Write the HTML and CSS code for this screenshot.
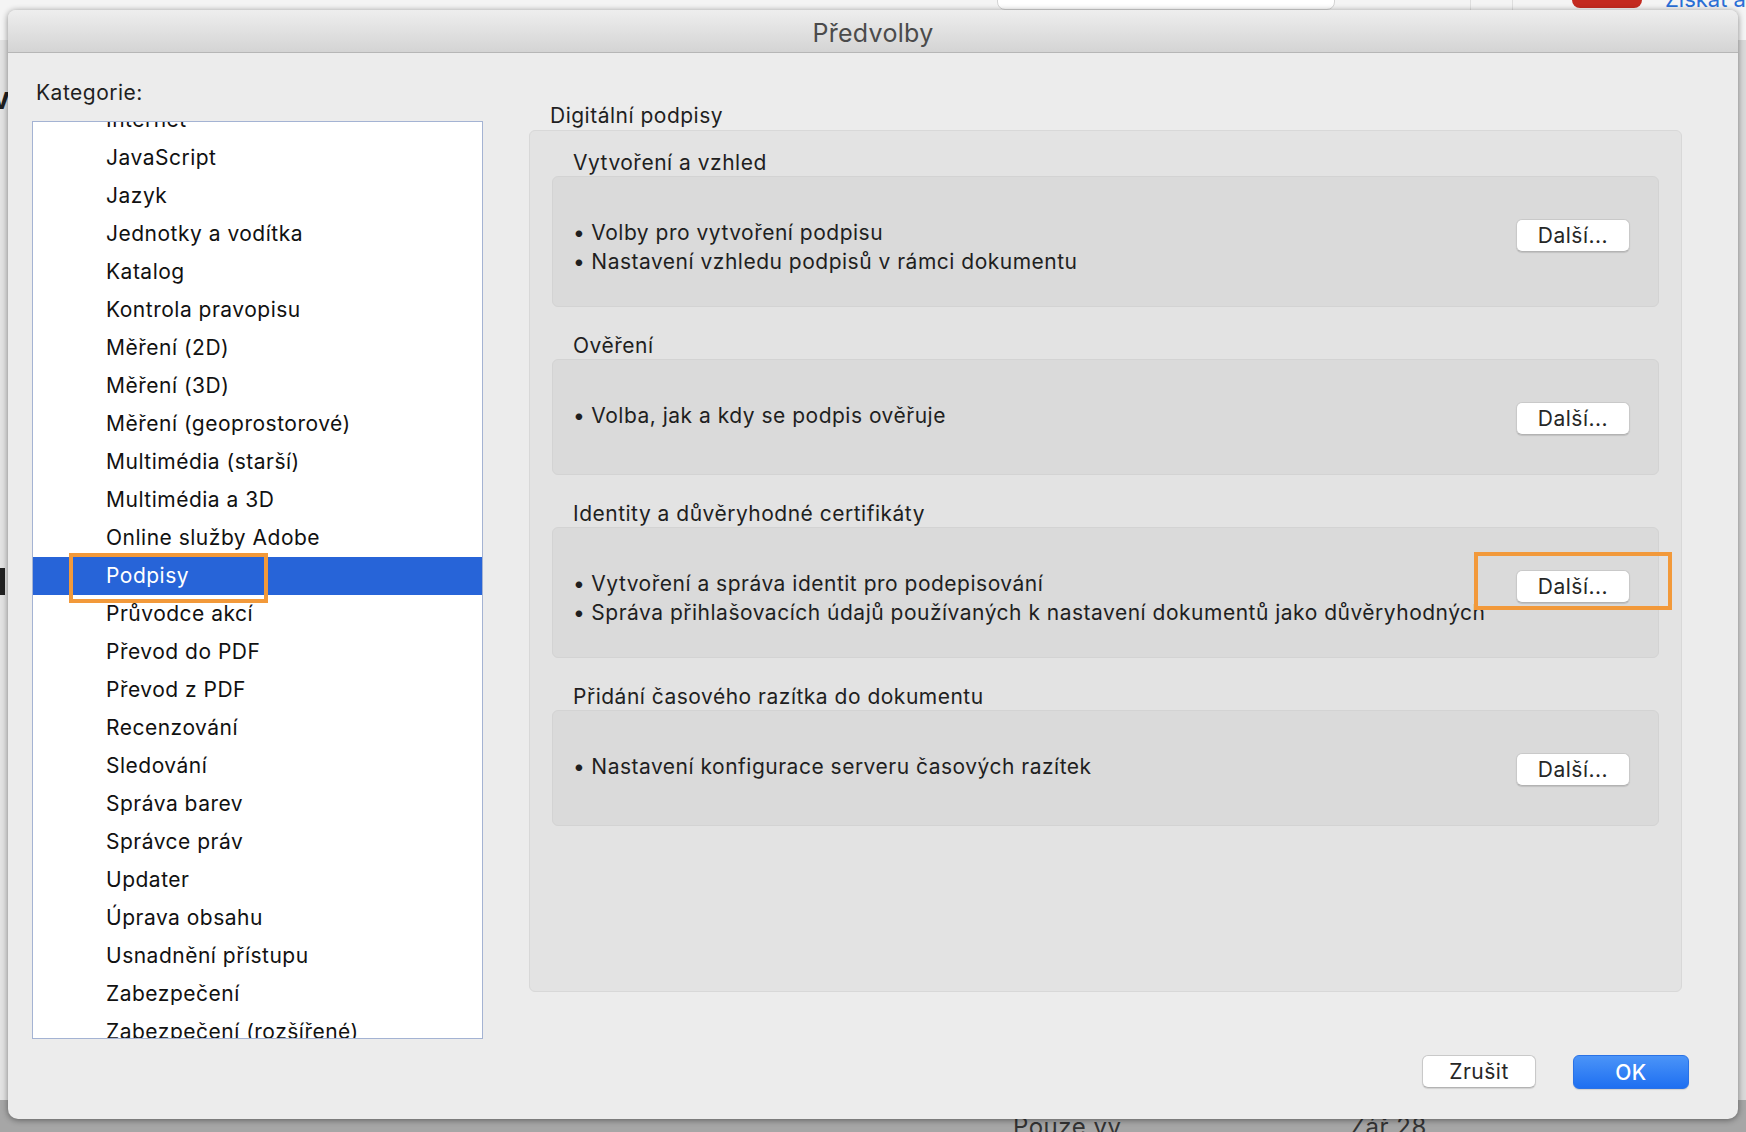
FILE: index.html
```html
<!DOCTYPE html>
<html lang="cs">

<head>
    <meta charset="UTF-8">
    <title>Předvolby</title>
    <link rel="stylesheet" href="styles.css">
</head>

<body>

    <!-- app window behind the sheet -->
    <div class="desk">
        <div class="desk-top">
            <div class="desk-search"></div>
            <div class="desk-sep one"></div>
            <div class="desk-sep two"></div>
            <div class="desk-red"></div>
            <div class="desk-link">Získat a</div>
        </div>
        <div class="desk-left">
            <span class="desk-v">v</span>
            <span class="desk-bar"></span>
        </div>
        <div class="desk-bottom">
            <span class="desk-text a">Pouze vy</span>
            <span class="desk-text b">Zář 28</span>
        </div>
    </div>

    <div class="dialog">
        <div class="titlebar">Předvolby</div>

        <div class="main">
            <!-- Categories -->
            <div class="left">
                <div class="label">Kategorie:</div>
                <div class="listbox">
                    <ul class="cats">
                        <li>Internet</li>
                        <li>JavaScript</li>
                        <li>Jazyk</li>
                        <li>Jednotky a vodítka</li>
                        <li>Katalog</li>
                        <li>Kontrola pravopisu</li>
                        <li>Měření (2D)</li>
                        <li>Měření (3D)</li>
                        <li>Měření (geoprostorové)</li>
                        <li>Multimédia (starší)</li>
                        <li>Multimédia a 3D</li>
                        <li>Online služby Adobe</li>
                        <li class="selected">Podpisy<span class="mark mark-cat"></span></li>
                        <li>Průvodce akcí</li>
                        <li>Převod do PDF</li>
                        <li>Převod z PDF</li>
                        <li>Recenzování</li>
                        <li>Sledování</li>
                        <li>Správa barev</li>
                        <li>Správce práv</li>
                        <li>Updater</li>
                        <li>Úprava obsahu</li>
                        <li>Usnadnění přístupu</li>
                        <li>Zabezpečení</li>
                        <li>Zabezpečení (rozšířené)</li>
                    </ul>
                </div>
            </div>

            <!-- Settings panel -->
            <div class="right">
                <div class="label panel-title">Digitální podpisy</div>
                <div class="panel">

                    <div class="section">
                        <div class="section-title">Vytvoření a vzhled</div>
                        <div class="box tall">
                            <ul class="bullets">
                                <li>Volby pro vytvoření podpisu</li>
                                <li>Nastavení vzhledu podpisů v rámci dokumentu</li>
                            </ul>
                            <button class="btn more">Další...</button>
                        </div>
                    </div>

                    <div class="section">
                        <div class="section-title">Ověření</div>
                        <div class="box">
                            <ul class="bullets">
                                <li>Volba, jak a kdy se podpis ověřuje</li>
                            </ul>
                            <button class="btn more">Další...</button>
                        </div>
                    </div>

                    <div class="section">
                        <div class="section-title">Identity a důvěryhodné certifikáty</div>
                        <div class="box tall">
                            <ul class="bullets">
                                <li>Vytvoření a správa identit pro podepisování</li>
                                <li>Správa přihlašovacích údajů používaných k nastavení dokumentů jako důvěryhodných</li>
                            </ul>
                            <button class="btn more">Další...</button>
                            <span class="mark mark-btn"></span>
                        </div>
                    </div>

                    <div class="section">
                        <div class="section-title">Přidání časového razítka do dokumentu</div>
                        <div class="box">
                            <ul class="bullets">
                                <li>Nastavení konfigurace serveru časových razítek</li>
                            </ul>
                            <button class="btn more">Další...</button>
                        </div>
                    </div>

                </div>
            </div>
        </div>

        <div class="footer">
            <button class="btn">Zrušit</button>
            <button class="btn primary">OK</button>
        </div>
    </div>

</body>

</html>
```

FILE: styles.css
```css
body {
    margin: 0;
    width: 1746px;
    height: 1132px;
    overflow: hidden;
    position: relative;
    font-family: Inter, "Noto Sans", sans-serif;
    font-size: 21px;
    letter-spacing: 0.5px;
    color: #1f1f1f;
    background: #d9d9d9;
}

/* window behind */
.desk-top {
    position: absolute;
    left: 0;
    top: 0;
    width: 1746px;
    height: 40px;
    background: #f4f4f4;
}

.desk-search {
    position: absolute;
    left: 997px;
    top: -20px;
    width: 336px;
    height: 28px;
    background: #fff;
    border: 1px solid #d4d4d4;
    border-radius: 8px;
}

.desk-sep {
    position: absolute;
    top: 0;
    width: 1px;
    height: 20px;
    background: #dedede;
}

.desk-sep.one {
    left: 1470px;
}

.desk-sep.two {
    left: 1512px;
}

.desk-red {
    position: absolute;
    left: 1572px;
    top: -20px;
    width: 70px;
    height: 28px;
    background: #c42a20;
    border-radius: 8px;
}

.desk-link {
    position: absolute;
    left: 1665px;
    top: -14px;
    color: #2a6fd6;
    font-size: 22px;
    letter-spacing: 0;
    white-space: nowrap;
}

.desk-left {
    position: absolute;
    left: 0;
    top: 40px;
    width: 10px;
    height: 1092px;
    background: #e2e2e2;
}

.desk-v {
    position: absolute;
    left: -8px;
    top: 40px;
    font-size: 30px;
    font-weight: 700;
}

.desk-bar {
    position: absolute;
    left: 0;
    top: 528px;
    width: 5px;
    height: 27px;
    background: #222;
}

.desk-bottom {
    position: absolute;
    left: 0;
    top: 1100px;
    width: 1746px;
    height: 32px;
    background: #a6a6a6;
}

.desk-text {
    position: absolute;
    top: 12px;
    font-size: 24px;
    color: #333;
}

.desk-text.a {
    left: 1013px;
}

.desk-text.b {
    left: 1350px;
}

/* the dialog sheet */
.dialog {
    position: absolute;
    left: 8px;
    top: 10px;
    width: 1730px;
    height: 1109px;
    background: #ececec;
    border-radius: 8px 8px 10px 10px;
    box-shadow: 0 1px 6px rgba(0, 0, 0, 0.45);
    display: flex;
    flex-direction: column;
    overflow: hidden;
}

.titlebar {
    height: 42px;
    line-height: 46px;
    text-align: center;
    font-size: 25px;
    letter-spacing: 0.3px;
    color: #4b4b4b;
    background: linear-gradient(to bottom, #eeeeee, #d4d4d4);
    border-bottom: 1px solid #b6b6b6;
}

.main {
    display: flex;
    height: 986px;
}

.label {
    line-height: 26px;
}

.left {
    margin-left: 24px;
    width: 451px;
    padding-top: 27px;
}

.left .label {
    margin-left: 4px;
}

.listbox {
    margin-top: 15px;
    height: 916px;
    background: #fff;
    border: 1px solid #a4b3d3;
    overflow: hidden;
}

.cats {
    list-style: none;
    margin: -21px 0 0;
    padding: 0;
}

.cats li {
    position: relative;
    height: 38px;
    line-height: 38px;
    padding-left: 73px;
    color: #111;
}

.cats li.selected {
    background: #2764d8;
    color: #fff;
}

/* orange highlight marks */
.mark {
    position: absolute;
    border: 4px solid #f2993a;
    box-sizing: border-box;
}

.mark-cat {
    left: 36px;
    top: -4px;
    width: 199px;
    height: 50px;
}

.right {
    margin-left: 46px;
    width: 1153px;
    padding-top: 50px;
}

.panel-title {
    margin-left: 21px;
}

.panel {
    margin-top: 1px;
    height: 862px;
    box-sizing: border-box;
    padding: 16px 22px 0;
    background: #e3e3e3;
    border: 1px solid #d8d8d8;
    border-radius: 6px;
}

.section {
    margin-top: 23px;
}

.section:first-child {
    margin-top: 0;
}

.section-title {
    line-height: 27px;
    padding: 2px 0 0 21px;
}

.box {
    position: relative;
    display: flex;
    align-items: flex-start;
    justify-content: space-between;
    height: 116px;
    padding: 41px 28px 0 20px;
    box-sizing: border-box;
    background: #dadada;
    border: 1px solid #d3d3d3;
    border-radius: 6px;
}

.box.tall {
    height: 131px;
}

.bullets {
    list-style: none;
    margin: 0;
    padding: 0;
    white-space: nowrap;
}

.bullets li {
    line-height: 29px;
}

.bullets li::before {
    content: "•";
    margin-right: 6px;
}

.btn {
    font-family: inherit;
    font-size: 21px;
    letter-spacing: 0.5px;
    color: #262626;
    background: #fff;
    border: 1px solid #c9c9c9;
    border-bottom-color: #b3b3b3;
    border-radius: 6px;
    box-shadow: 0 1px 1px rgba(0, 0, 0, 0.12);
    width: 114px;
    height: 33px;
    padding: 0;
}

.btn.more {
    flex-shrink: 0;
    margin-top: 1px;
}

.mark-btn {
    left: 921px;
    top: 24px;
    width: 198px;
    height: 58px;
}

.footer {
    display: flex;
    justify-content: flex-end;
    gap: 37px;
    margin-top: 16px;
    padding-right: 49px;
}

.btn.primary {
    width: 116px;
    height: 34px;
    color: #fff;
    font-weight: 500;
    background: linear-gradient(to bottom, #4b94f8, #1e6ff1);
    border: 1px solid #2a72e6;
}
```
